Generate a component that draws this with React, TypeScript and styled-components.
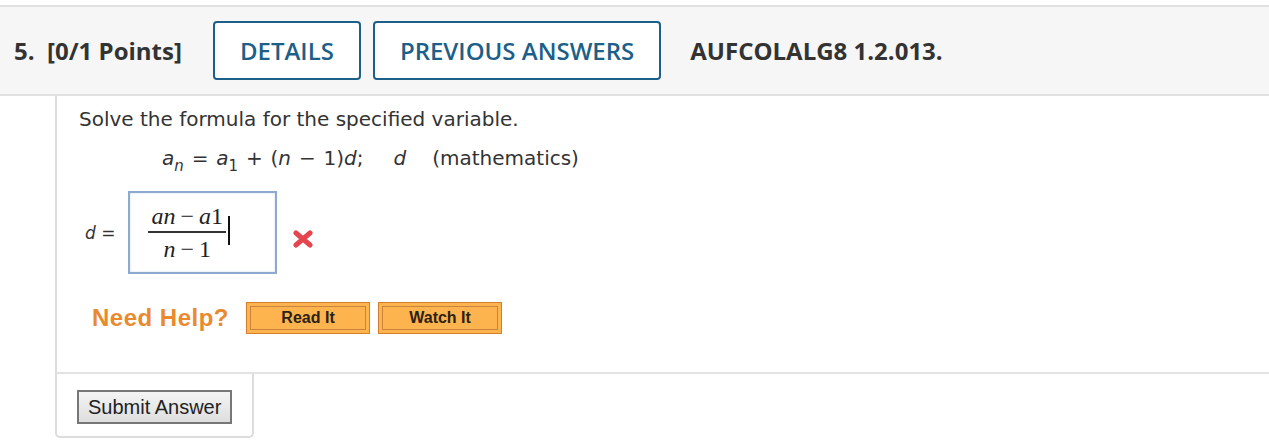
import React from "react";
import styled, { createGlobalStyle } from "styled-components";

const GlobalStyle = createGlobalStyle`
  html, body {
    margin: 0;
    padding: 0;
    background: #ffffff;
  }
  body {
    font-family: "Open Sans", "Liberation Sans", sans-serif;
    color: #333333;
  }
`;

const Page = styled.div`
  padding-top: 5px;
  width: 1269px;
`;

const QuestionHeader = styled.header`
  display: flex;
  align-items: center;
  height: 87px;
  padding-left: 14px;
  background: #f6f6f6;
  border-top: 2px solid #e1e1e1;
  border-bottom: 2px solid #e1e1e1;
  font-family: "Open Sans", sans-serif;
`;

const HeaderTitle = styled.span`
  font-size: 24px;
  font-weight: 700;
  color: #333333;
  white-space: pre;
  margin-right: 31px;
`;

const HeaderButton = styled.button`
  all: unset;
  box-sizing: border-box;
  height: 59px;
  padding: 0 25px;
  border: 2px solid #1c5f88;
  border-radius: 4px;
  background: #ffffff;
  color: #1c5f88;
  font-family: "Open Sans", sans-serif;
  font-size: 24px;
  font-weight: 600;
  display: flex;
  align-items: center;
  margin-right: 12px;
  cursor: pointer;
`;

const Reference = styled.span`
  margin-left: 17px;
  font-size: 24px;
  font-weight: 700;
  color: #333333;
`;

const QuestionBody = styled.section`
  margin-left: 55px;
  border-left: 2px solid #dcdcdc;
  border-bottom: 2px solid #e2e2e2;
  padding: 11px 0 38px 22px;
  font-family: "DejaVu Sans", Verdana, sans-serif;
`;

const Prompt = styled.p`
  margin: 0;
  font-size: 20px;
  color: #333333;
  line-height: 24px;
`;

const Formula = styled.p`
  margin: 15px 0 0 83px;
  font-size: 20px;
  line-height: 24px;
  word-spacing: 1.5px;
  color: #333333;
  white-space: pre;

  & i {
    font-style: italic;
  }
  & sub {
    font-size: 15px;
    vertical-align: -6px;
    line-height: 0;
  }
`;

const Spacer = styled.span<{ $w: number }>`
  display: inline-block;
  width: ${(p) => p.$w}px;
`;

const AnswerRow = styled.div`
  display: flex;
  align-items: center;
  margin-top: 21px;
  margin-left: 6px;
`;

const AnswerLabel = styled.span`
  font-size: 17px;
  color: #333333;
  margin-right: 13px;

  & i {
    font-style: italic;
  }
`;

const MathInput = styled.div`
  box-sizing: border-box;
  width: 149px;
  height: 83px;
  border: 2px solid #8eaacf;
  box-shadow: inset 0 0 2px rgba(120, 150, 200, 0.4);
  background: #ffffff;
  display: flex;
  align-items: center;
  padding-left: 18px;
`;

const Fraction = styled.span`
  display: inline-flex;
  flex-direction: column;
  align-items: center;
  font-family: "Liberation Serif", "Times New Roman", serif;
  font-size: 24px;
  color: #222222;
  line-height: 24px;
  white-space: nowrap;

  & i {
    font-style: italic;
  }
`;

const Numerator = styled.span`
  padding: 0 3px 3px;
`;

const Denominator = styled.span`
  border-top: 2px solid #333333;
  padding: 4px 3px 0;
  align-self: stretch;
  text-align: center;
`;

const Minus = styled.span`
  margin: 0 5px;
`;

const Caret = styled.span`
  width: 2px;
  height: 29px;
  background: #111111;
  margin-bottom: 5px;
  margin-left: 2px;
`;

const WrongMark = styled.svg`
  margin-left: 16px;
  margin-top: 13px;
`;

const HelpRow = styled.div`
  display: flex;
  align-items: center;
  margin-top: 28px;
  margin-left: 13px;
`;

const HelpText = styled.span`
  font-family: "Liberation Sans", Arial, sans-serif;
  font-size: 24px;
  letter-spacing: 0.5px;
  font-weight: 700;
  color: #ea8a2e;
  margin-right: 17px;
`;

const HelpButton = styled.button`
  all: unset;
  box-sizing: border-box;
  width: 124px;
  height: 32px;
  margin-right: 8px;
  background: #fdb44e;
  border: 1px solid #d17f2c;
  box-shadow: inset 0 0 0 3px #fdb44e, inset 0 0 0 4px #c98540;
  text-align: center;
  font-family: "Liberation Sans", Arial, sans-serif;
  font-size: 16px;
  font-weight: 700;
  color: #2b2114;
  line-height: 30px;
  cursor: pointer;
`;

const SubmitBox = styled.div`
  box-sizing: border-box;
  width: 199px;
  margin-left: 55px;
  padding: 16px 0 12px 20px;
  border: 2px solid #dcdcdc;
  border-top: none;
  border-radius: 0 0 5px 5px;
`;

const SubmitButton = styled.button`
  all: unset;
  box-sizing: border-box;
  height: 34px;
  padding: 0 9px;
  border: 2px solid #777777;
  background: linear-gradient(#f4f4f4, #dedede);
  font-family: "Liberation Sans", Arial, sans-serif;
  font-size: 20px;
  color: #222222;
  line-height: 30px;
  cursor: pointer;
`;

const App: React.FC = () => {
  return (
    <>
      <GlobalStyle />
      <Page>
        <QuestionHeader>
          <HeaderTitle>{"5.  [0/1 Points]"}</HeaderTitle>
          <HeaderButton>DETAILS</HeaderButton>
          <HeaderButton>PREVIOUS ANSWERS</HeaderButton>
          <Reference>AUFCOLALG8 1.2.013.</Reference>
        </QuestionHeader>

        <QuestionBody>
          <Prompt>Solve the formula for the specified variable.</Prompt>
          <Formula>
            <i>a</i>
            <sub>
              <i>n</i>
            </sub>
            {" = "}
            <i>a</i>
            <sub>1</sub>
            {" + ("}
            <i>n</i>
            {" − 1)"}
            <i>d</i>
            {";"}
            <Spacer $w={30} />
            <i>d</i>
            <Spacer $w={26} />
            {"(mathematics)"}
          </Formula>

          <AnswerRow>
            <AnswerLabel>
              <i>d</i> =
            </AnswerLabel>
            <MathInput>
              <Fraction>
                <Numerator>
                  <i>an</i>
                  <Minus>−</Minus>
                  <i>a</i>1
                </Numerator>
                <Denominator>
                  <i>n</i>
                  <Minus>−</Minus>1
                </Denominator>
              </Fraction>
              <Caret />
            </MathInput>
            <WrongMark width="20" height="18" viewBox="0 0 20 18">
              <path
                d="M3 3 L17 15 M17 3 L3 15"
                stroke="#e5454f"
                strokeWidth="5"
                strokeLinecap="round"
              />
            </WrongMark>
          </AnswerRow>

          <HelpRow>
            <HelpText>Need Help?</HelpText>
            <HelpButton>Read It</HelpButton>
            <HelpButton>Watch It</HelpButton>
          </HelpRow>
        </QuestionBody>

        <SubmitBox>
          <SubmitButton>Submit Answer</SubmitButton>
        </SubmitBox>
      </Page>
    </>
  );
};

export default App;
